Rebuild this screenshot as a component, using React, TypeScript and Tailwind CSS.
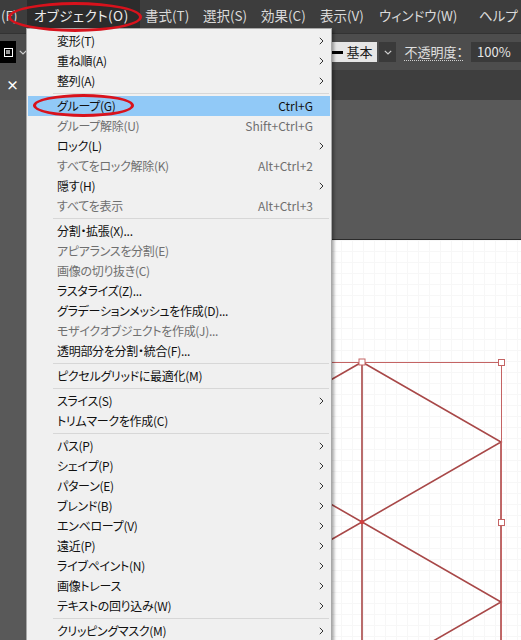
import type { ReactNode } from "react";

type Item =
  | { sep: true }
  | { label: string; shortcut?: string; sub?: boolean; disabled?: boolean; active?: boolean };

const items: Item[] = [
  { label: "変形(T)", sub: true },
  { label: "重ね順(A)", sub: true },
  { label: "整列(A)", sub: true },
  { sep: true },
  { label: "グループ(G)", shortcut: "Ctrl+G", active: true },
  { label: "グループ解除(U)", shortcut: "Shift+Ctrl+G", disabled: true },
  { label: "ロック(L)", sub: true },
  { label: "すべてをロック解除(K)", shortcut: "Alt+Ctrl+2", disabled: true },
  { label: "隠す(H)", sub: true },
  { label: "すべてを表示", shortcut: "Alt+Ctrl+3", disabled: true },
  { sep: true },
  { label: "分割・拡張(X)..." },
  { label: "アピアランスを分割(E)", disabled: true },
  { label: "画像の切り抜き(C)", disabled: true },
  { label: "ラスタライズ(Z)..." },
  { label: "グラデーションメッシュを作成(D)..." },
  { label: "モザイクオブジェクトを作成(J)...", disabled: true },
  { label: "透明部分を分割・統合(F)..." },
  { sep: true },
  { label: "ピクセルグリッドに最適化(M)" },
  { sep: true },
  { label: "スライス(S)", sub: true },
  { label: "トリムマークを作成(C)" },
  { sep: true },
  { label: "パス(P)", sub: true },
  { label: "シェイプ(P)", sub: true },
  { label: "パターン(E)", sub: true },
  { label: "ブレンド(B)", sub: true },
  { label: "エンベロープ(V)", sub: true },
  { label: "遠近(P)", sub: true },
  { label: "ライブペイント(N)", sub: true },
  { label: "画像トレース", sub: true },
  { label: "テキストの回り込み(W)", sub: true },
  { sep: true },
  { label: "クリッピングマスク(M)", sub: true },
];

const topMenu: { label: string; w: string }[] = [
  { label: "書式(T)", w: "w-[58px]" },
  { label: "選択(S)", w: "w-[58px]" },
  { label: "効果(C)", w: "w-[59px]" },
  { label: "表示(V)", w: "w-[59px]" },
  { label: "ウィンドウ(W)", w: "w-[100px]" },
  { label: "ヘルプ", w: "w-[46px]" },
];

function Chevron() {
  return (
    <svg width="5" height="8" viewBox="0 0 5 8">
      <path d="M0.8 0.8 L4 4 L0.8 7.2" fill="none" stroke="currentColor" strokeWidth="1" />
    </svg>
  );
}

function DownChevron() {
  return (
    <svg width="8" height="5" viewBox="0 0 8 5">
      <path d="M0.8 0.8 L4 4 L7.2 0.8" fill="none" stroke="#d0d0d0" strokeWidth="1.2" />
    </svg>
  );
}

function MenuRow({ item }: { item: Item }): ReactNode {
  if ("sep" in item) {
    return (
      <div className="flex h-[5px] items-center">
        <div className="ml-[25px] mr-[1px] h-px flex-1 bg-[#d7d7d7]" />
      </div>
    );
  }
  const color = item.disabled ? "text-[#6f6f6f]" : "text-[#111]";
  return (
    <div
      className={`flex h-[20px] items-center pl-[29px] ${item.active ? "bg-[#91c9f7]" : ""} ${color}`}
    >
      <span className="flex-1 whitespace-nowrap tracking-[-0.3px]">{item.label}</span>
      {item.shortcut && <span className="whitespace-nowrap">{item.shortcut}</span>}
      <span className="flex w-[17px] justify-center text-[#333]">{item.sub && <Chevron />}</span>
    </div>
  );
}

export default function App() {
  return (
    <div
      className="relative flex h-[640px] w-[521px] flex-col overflow-hidden bg-[#595959] [font-feature-settings:'palt'] text-[12px]"
      style={{ fontFamily: '"Noto Sans CJK JP", "Noto Sans", sans-serif' }}
    >
      {/* Menu bar */}
      <div className="flex h-[33px] shrink-0 items-start bg-[#3d3d3d] text-[13.5px] text-[#dadada]">
        <div className="flex h-[30px] w-[27px] shrink-0 items-center whitespace-nowrap pl-[1px]">
          (F)
        </div>
        <div className="flex h-[30px] w-[113px] shrink-0 items-center whitespace-nowrap bg-[#2c2c2c] pl-[7px] tracking-[0.5px] text-[#ececec]">
          オブジェクト(O)
        </div>
        {topMenu.map((m) => (
          <div
            key={m.label}
            className={`flex h-[30px] ${m.w} shrink-0 items-center whitespace-nowrap pl-[5px]`}
          >
            {m.label}
          </div>
        ))}
      </div>

      {/* Control bar */}
      <div className="flex h-[37px] shrink-0 items-center border-t border-[#333] bg-[#4d4d4d]">
        <div className="flex h-[22px] w-[16px] items-center justify-center bg-black">
          <div className="flex h-[9px] w-[9px] items-center justify-center border border-white">
            <div className="h-[4px] w-[4px] bg-[#9a9a9a]" />
          </div>
        </div>
        <div className="ml-[3px]">
          <DownChevron />
        </div>
        <div className="ml-auto flex items-center">
          <div className="flex h-[20px] w-[80px] items-center bg-[#e6e6e6] pl-[30px]">
            <div className="h-[3px] w-[16px] bg-black" />
            <span className="ml-[3px] text-[13px] text-[#1a1a1a]">基本</span>
          </div>
          <div className="ml-[2px] flex h-[20px] w-[17px] items-center justify-center bg-[#3a3a3a]">
            <DownChevron />
          </div>
          <span className="ml-[8px] border-b border-dotted border-[#cfcfcf] text-[13px] leading-[16px] text-[#e0e0e0]">
            不透明度：
          </span>
          <div className="ml-[8px] flex h-[20px] w-[50px] items-center bg-[#3a3a3a] pl-[6px] text-[13px] text-[#e6e6e6]">
            100%
          </div>
        </div>
      </div>

      {/* Tab bar */}
      <div className="flex h-[30px] shrink-0 bg-[#3e3e3e]">
        <div className="flex w-[170px] items-center bg-[#535353] pl-[6px] text-[13px] font-bold text-white">
          ×
        </div>
      </div>

      {/* Workspace */}
      <div className="flex flex-1 flex-col">
        <div className="h-[139px] shrink-0 bg-[#595959]" />
        <div className="flex flex-1">
          <div className="w-[120px] shrink-0 bg-[#595959]" />
          <div className="relative flex-1 border-l border-t border-[#2b2b2b] bg-white bg-[linear-gradient(to_right,#f7f7f7_1px,transparent_1px),linear-gradient(to_bottom,#f7f7f7_1px,transparent_1px)] bg-[size:11px_11px]">
            <svg
              className="absolute left-0 top-0"
              width="401"
              height="400"
              viewBox="120 240 401 400"
            >
              <g stroke="#a84848" strokeWidth="1.6" fill="none">
                <path d="M361 362 L500 442 L361 522 L500 602 L361 682" />
                <path d="M361 362 L300 397" />
                <path d="M300 487 L361 522 L300 557" />
                <path d="M361 362 L361 640" />
                <path d="M500 442 L500 640" />
              </g>
              <g stroke="#c46464" strokeWidth="1" fill="none">
                <path d="M300 362.5 L500.5 362.5 L500.5 640" />
              </g>
              <rect x="358" y="359" width="6" height="6" fill="white" stroke="#c46464" strokeWidth="1" />
              <rect x="497.5" y="359.5" width="6" height="6" fill="white" stroke="#c46464" strokeWidth="1" />
              <rect x="497.5" y="519.5" width="6" height="6" fill="white" stroke="#c46464" strokeWidth="1" />
              <circle cx="361" cy="522" r="2.2" fill="#d04040" />
            </svg>
          </div>
        </div>
      </div>

      {/* Object dropdown */}
      <div className="absolute left-[26px] top-[28px] w-[306px] border border-[#a8a8a8] bg-[#f0f0f0] px-[1px] py-[2px] shadow-[2px_2px_3px_rgba(0,0,0,0.35)]">
        {items.map((it, i) => (
          <MenuRow key={i} item={it} />
        ))}
      </div>

      {/* Annotation circles */}
      <div className="absolute left-[8px] top-[2px] h-[30px] w-[134px] rounded-[50%] border-[3px] border-[#d8121c]" />
      <div className="absolute left-[33px] top-[94px] h-[23px] w-[101px] rounded-[50%] border-[3px] border-[#d8121c]" />
    </div>
  );
}
